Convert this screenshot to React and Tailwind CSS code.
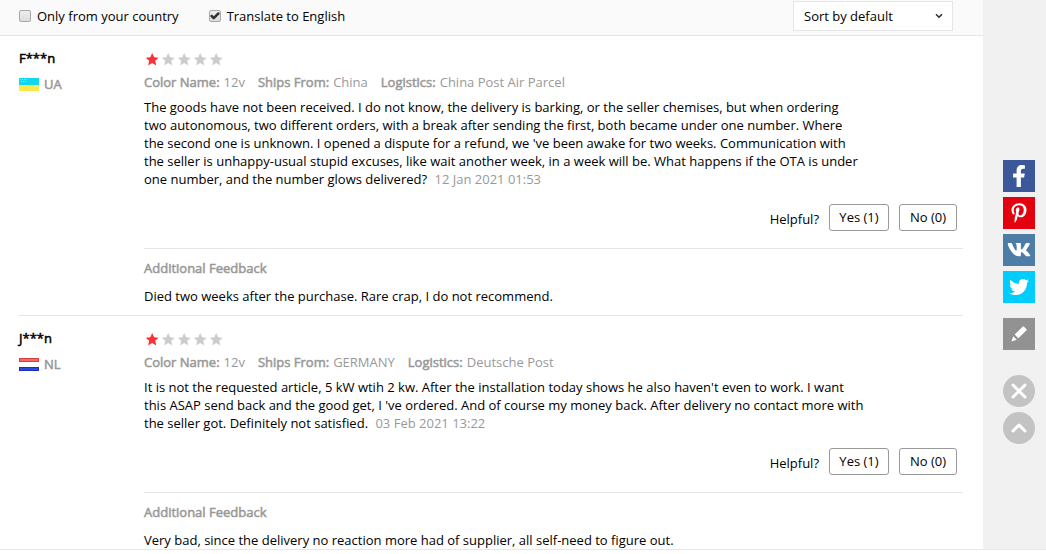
import { useState } from "react";
import { FaFacebookF, FaPinterestP, FaTwitter } from "react-icons/fa";
import { Check, ChevronDown, ChevronUp, X } from "lucide-react";

const reviews = [
    {
        id: 1,
        name: "F***n",
        country: "UA",
        stars: 1,
        info: [
            ["Color Name:", "12v"],
            ["Ships From:", "China"],
            ["Logistics:", "China Post Air Parcel"],
        ],
        text: "The goods have not been received. I do not know, the delivery is barking, or the seller chemises, but when ordering two\u00a0autonomous, two different orders, with a break after sending the first, both became under one number. Where the\u00a0second one is unknown. I opened a dispute for a refund, we 've been awake for two weeks. Communication with the\u00a0seller is unhappy-usual stupid excuses, like wait another week, in a week will be. What happens if the OTA is under one\u00a0number, and the number glows delivered?",
        date: "12 Jan 2021 01:53",
        yes: 1,
        no: 0,
        additional: "Died two weeks after the purchase. Rare crap, I do not recommend.",
    },
    {
        id: 2,
        name: "J***n",
        country: "NL",
        stars: 1,
        info: [
            ["Color Name:", "12v"],
            ["Ships From:", "GERMANY"],
            ["Logistics:", "Deutsche Post"],
        ],
        text: "It is not the requested article, 5 kW wtih 2 kw. After the installation today shows he also haven't even to work. I want this ASAP send back and the good get, I 've ordered. And of course my money back. After delivery no contact more with the seller got. Definitely not satisfied.",
        date: "03 Feb 2021 13:22",
        yes: 1,
        no: 0,
        additional: "Very bad, since the delivery no reaction more had of supplier, all self-need to figure out.",
    },
];

// regular weight with a heavier outline, keeps the regular letter widths
const strong = "[-webkit-text-stroke:0.04em_currentColor]";

const Flag = ({ country }) => {
    if (country === "UA") {
        return (
            <svg viewBox="0 0 20 13" className="h-[13px] w-5" aria-hidden="true">
                <rect width="20" height="7" fill="#12d8ee" />
                <rect y="7" width="20" height="6" fill="#fbe94b" />
                <path d="M1 1.5h8M2 3.5h5" stroke="#7be9f5" strokeDasharray="1 1" />
            </svg>
        );
    }
    return (
        <svg viewBox="0 0 20 13" className="h-[13px] w-5" aria-hidden="true">
            <rect width="20" height="13" fill="#fff" />
            <rect width="20" height="4" fill="#e23b3b" />
            <rect x="1" y="1" width="18" height="2" fill="#ee6a6a" />
            <rect y="9" width="20" height="4" fill="#1a2fc4" />
            <rect x="1" y="10" width="18" height="2" fill="#2f46d8" />
        </svg>
    );
};

const Stars = ({ count }) => (
    <div className="flex h-[18px] items-center gap-[3px] pl-0.5" role="img" aria-label={`${count} of 5 stars`}>
        {[1, 2, 3, 4, 5].map((n) => (
            <svg
                key={n}
                viewBox="0 0 13 13"
                className={n <= count ? "size-[13px] fill-[#fb2f36]" : "size-[13px] fill-[#cccccc]"}
            >
                <path d="M6.2 0l1.9 4.3 4.6.4-3.5 3.1 1.1 4.7-4.1-2.5-4.1 2.5 1.1-4.7L-.3 4.7l4.6-.4z" />
            </svg>
        ))}
    </div>
);

const CheckOption = ({ id, label, checked, onChange }) => (
    <label htmlFor={id} className="flex items-center gap-1.5">
        <span className="relative flex size-3">
            <input
                id={id}
                type="checkbox"
                checked={checked}
                onChange={(e) => onChange(e.target.checked)}
                className="size-3 appearance-none rounded-xs border border-[#a9a9a9] bg-linear-to-b from-[#eeeeee] to-[#dcdcdc]"
            />
            {checked && (
                <Check className="pointer-events-none absolute inset-px size-2.5 text-[#333333]" strokeWidth={6} />
            )}
        </span>
        {label}
    </label>
);

const Review = ({ review }) => (
    <article className="flex border-b border-[#e6e6e6] pt-[13px] pb-2.5 last:border-0 last:pb-0">
        <div className="w-[126px] shrink-0 pl-px">
            <p className={strong}>{review.name}</p>
            <p className={`mt-2 flex items-center gap-[5px] text-[#999999] ${strong}`}>
                <Flag country={review.country} />
                {review.country}
            </p>
        </div>
        <div className="min-w-0 flex-1 pt-px">
            <Stars count={review.stars} />
            <dl className="mt-[5px] flex gap-[13px] text-[#999999]">
                {review.info.map(([label, value]) => (
                    <div key={label} className="flex gap-1">
                        <dt className={strong}>{label}</dt>
                        <dd>{value}</dd>
                    </div>
                ))}
            </dl>
            <p className="mt-[7px] max-w-[722px]">
                {review.text} <span className="ml-1 text-[#999999]">{review.date}</span>
            </p>
            <div className="mt-4 flex justify-end gap-2.5 pr-1.5">
                <span className="pt-1.5">Helpful?</span>
                <button type="button" className="h-[27px] w-[60px] rounded-[3px] border border-[#999999] bg-white pb-px">
                    Yes ({review.yes})
                </button>
                <button type="button" className="h-[27px] w-[58px] rounded-[3px] border border-[#999999] bg-white pb-px">
                    No ({review.no})
                </button>
            </div>
            <div className="mt-[17px] border-t border-[#e6e6e6] pt-2.5">
                <h3 className={`text-[#999999] ${strong}`}>Additional Feedback</h3>
                <p className="mt-2.5">{review.additional}</p>
            </div>
        </div>
    </article>
);

const VkIcon = () => (
    <svg viewBox="0 0 576 512" className="w-6 fill-white" aria-hidden="true">
        <path d="M545 117.7c3.7-12.5 0-21.7-17.8-21.7h-58.9c-15 0-21.9 7.9-25.6 16.7 0 0-30 73.1-72.4 120.5-13.7 13.7-20 18.1-27.5 18.1-3.7 0-9.4-4.4-9.4-16.9V117.7c0-15-4.2-21.7-16.6-21.7h-92.6c-9.4 0-15 7-15 13.5 0 14.2 21.2 17.5 23.4 57.5v86.8c0 19-3.4 22.5-10.9 22.5-20 0-68.6-73.4-97.4-157.4-5.8-16.3-11.5-22.9-26.6-22.9H38.8c-16.8 0-20.2 7.9-20.2 16.7 0 15.6 20 93.1 93.1 195.5C160.4 378.1 229 416 291.4 416c37.5 0 42.1-8.4 42.1-22.9 0-66.8-3.4-73.1 15.4-73.1 8.7 0 23.7 4.4 58.7 38.1 40 40 46.6 57.9 69 57.9h58.9c16.8 0 25.3-8.4 20.4-25-11.2-34.9-86.9-106.7-90.3-111.5-8.7-11.2-6.2-16.2 0-26.2.1-.1 72-101.3 79.4-135.6z" />
    </svg>
);

const PencilIcon = () => (
    <svg viewBox="0 0 16 16" className="size-4 fill-white" aria-hidden="true">
        <path d="M11.6.7q.7-.7 1.4 0l2.3 2.3q.7.7 0 1.4L7.4 12.3 3.7 8.6z" />
        <path d="M2.2 10.2l3.6 3.6L.4 15.6z" />
    </svg>
);

const shareLinks = [
    { label: "Facebook", icon: <FaFacebookF className="size-[22px]" />, color: "bg-[#3b5998]" },
    { label: "Pinterest", icon: <FaPinterestP className="size-5" />, color: "bg-[#e3000f]" },
    { label: "VK", icon: <VkIcon />, color: "bg-[#4d7ca7]" },
    { label: "Twitter", icon: <FaTwitter className="size-5" />, color: "bg-[#00cdfc]" },
];

const App = () => {
    const [onlyCountry, setOnlyCountry] = useState(false);
    const [translate, setTranslate] = useState(true);

    return (
        <div className="flex border-b border-[#e8e8e8] bg-[#f1f1f1] font-['Open_Sans',sans-serif] text-[13px] leading-[18px] text-black">
            <main className="min-w-0 flex-1 bg-white">
                <div className="flex items-start justify-between border-b border-[#e6e6e6] bg-[#fafafa] pr-[30px] pb-1 pl-[19px]">
                    <div className="flex gap-[30px] pt-[7px]">
                        <CheckOption
                            id="country"
                            label="Only from your country"
                            checked={onlyCountry}
                            onChange={setOnlyCountry}
                        />
                        <CheckOption
                            id="translate"
                            label="Translate to English"
                            checked={translate}
                            onChange={setTranslate}
                        />
                    </div>
                    <div className="relative mt-px">
                        <select
                            aria-label="Sort reviews"
                            className="h-[30px] w-40 appearance-none border border-[#e6e6e6] bg-white px-2.5"
                        >
                            <option>Sort by default</option>
                            <option>Sort by latest</option>
                        </select>
                        <ChevronDown
                            className="pointer-events-none absolute top-2.5 right-[9px] size-2.5 text-[#333333]"
                            strokeWidth={4}
                        />
                    </div>
                </div>
                <div className="pr-5 pl-[18px]">
                    {reviews.map((review) => (
                        <Review key={review.id} review={review} />
                    ))}
                </div>
            </main>
            <aside className="flex w-[63px] shrink-0 flex-col items-start pt-40 pl-5 text-white">
                <nav className="flex flex-col gap-[5px]" aria-label="Share">
                    {shareLinks.map(({ label, icon, color }) => (
                        <a
                            key={label}
                            href="#"
                            aria-label={label}
                            className={`flex size-8 items-center justify-center ${color}`}
                        >
                            {icon}
                        </a>
                    ))}
                </nav>
                <button
                    type="button"
                    aria-label="Feedback"
                    className="mt-[15px] flex size-8 items-center justify-center bg-[#929292]"
                >
                    <PencilIcon />
                </button>
                <button
                    type="button"
                    aria-label="Close"
                    className="mt-[25px] flex size-8 items-center justify-center rounded-full bg-[#c3c3c3]"
                >
                    <X className="size-6" strokeWidth={3} />
                </button>
                <button
                    type="button"
                    aria-label="Back to top"
                    className="mt-[5px] flex size-8 items-center justify-center rounded-full bg-[#c3c3c3]"
                >
                    <ChevronUp className="size-6" strokeWidth={3} />
                </button>
            </aside>
        </div>
    );
};

export default App;
